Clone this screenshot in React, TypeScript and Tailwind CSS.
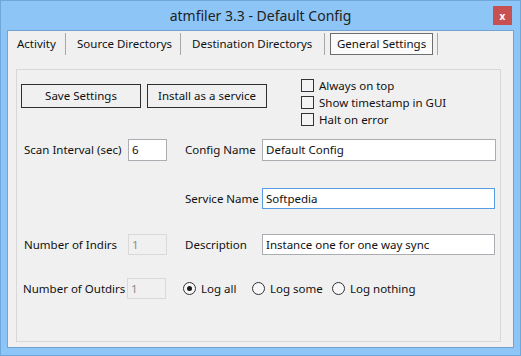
import React from 'react';

const Checkbox = ({ label }: { label: string }) => (
  <div className="flex items-center h-[17px]">
    <div className="w-[13px] h-[13px] border border-[#333333] bg-[#f4f4f4]" />
    <span className="ml-[5px]">{label}</span>
  </div>
);

const Radio = ({ label, checked, width }: { label: string; checked?: boolean; width: string }) => (
  <div className={`flex items-center ${width}`}>
    <div className="w-[13px] h-[13px] rounded-full border border-[#333333] bg-[#f7f7f7] flex items-center justify-center">
      {checked && <div className="w-[5px] h-[5px] rounded-full bg-[#1a1a1a]" />}
    </div>
    <span className="ml-[5px]">{label}</span>
  </div>
);

const Field = ({ value, className }: { value: string; className: string }) => (
  <div className={`h-full flex items-center pl-[3px] border ${className}`}>{value}</div>
);

const App: React.FC = () => {
  const tabs = [
    { name: 'Activity', w: 'w-[58px] pl-[9px]' },
    { name: 'Source Directorys', w: 'w-[115px] pl-[11px]' },
    { name: 'Destination Directorys', w: 'w-[144px] pl-[11px]' },
  ];

  return (
    <div className="w-[521px] h-[356px] bg-[#8dc5f6] border border-[#6ea7da] flex flex-col px-[6px] pb-[7px] font-['Noto_Sans',sans-serif] text-[11.5px] text-[#111111] whitespace-nowrap">
      {/* title bar */}
      <div className="relative h-[29px] flex items-center justify-center">
        <span className="text-[14px] text-[#222222]">atmfiler 3.3 - Default Config</span>
        <div className="absolute right-[2px] top-[5px] w-[19px] h-[19px] bg-[#c75050] flex items-center justify-center text-white text-[10px] font-bold leading-none">
          x
        </div>
      </div>

      {/* client area */}
      <div className="flex-1 border border-[#73a3d3] bg-[#f0f0f0] flex flex-col">
        <div className="flex h-[22px] mt-[2px]">
          {tabs.map(t => (
            <div key={t.name} className={`${t.w} h-full border-r border-[#a8a8a8] flex items-center`}>
              {t.name}
            </div>
          ))}
          <div className="w-[113px] h-full border-r border-[#a8a8a8] flex items-center">
            <div className="ml-[5px] w-[103px] h-[22px] border border-[#6e6e6e] bg-[#fbfbfb] flex items-center pl-[6px]">
              General Settings
            </div>
          </div>
        </div>

        {/* settings panel */}
        <div className="mt-[14px] ml-[8px] w-[485px] h-[273px] border border-[#d8d8d8] flex flex-col">
          <div className="flex items-start mt-[7px] pl-[4px]">
            <div className="mt-[7px] w-[120px] h-[24px] border border-[#2e2e2e] flex items-center justify-center">
              Save Settings
            </div>
            <div className="mt-[7px] ml-[6px] w-[120px] h-[24px] border border-[#2e2e2e] flex items-center justify-center">
              Install as a service
            </div>
            <div className="ml-[34px] flex flex-col">
              <Checkbox label="Always on top" />
              <Checkbox label="Show timestamp in GUI" />
              <Checkbox label="Halt on error" />
            </div>
          </div>

          <div className="flex items-center h-[22px] mt-[11px] pl-[7px]">
            <div className="w-[104px]">Scan Interval (sec)</div>
            <div className="w-[39px] h-full">
              <Field value="6" className="border-[#abadb3] bg-white" />
            </div>
            <div className="w-[18px]" />
            <div className="w-[77px]">Config Name</div>
            <div className="w-[234px] h-full">
              <Field value="Default Config" className="border-[#abadb3] bg-white" />
            </div>
          </div>

          <div className="flex items-center h-[21px] mt-[27px] pl-[7px]">
            <div className="w-[161px]" />
            <div className="w-[77px]">Service Name</div>
            <div className="w-[233px] h-full">
              <Field value="Softpedia" className="border-[#569de5] bg-white" />
            </div>
          </div>

          <div className="flex items-center h-[21px] mt-[25px] pl-[7px]">
            <div className="w-[104px]">Number of Indirs</div>
            <div className="w-[39px] h-full">
              <Field value="1" className="border-[#d9d9d9] bg-[#f0f0f0] text-[#8a8a8a]" />
            </div>
            <div className="w-[18px]" />
            <div className="w-[77px]">Description</div>
            <div className="w-[233px] h-full">
              <Field value="Instance one for one way sync" className="border-[#abadb3] bg-white" />
            </div>
          </div>

          <div className="flex items-center h-[21px] mt-[23px] pl-[6px]">
            <div className="w-[104px]">Number of Outdirs</div>
            <div className="w-[39px] h-full">
              <Field value="1" className="border-[#d9d9d9] bg-[#f0f0f0] text-[#8a8a8a]" />
            </div>
            <div className="w-[17px]" />
            <Radio label="Log all" checked width="w-[69px]" />
            <Radio label="Log some" width="w-[80px]" />
            <Radio label="Log nothing" width="w-[90px]" />
          </div>
        </div>
      </div>
    </div>
  );
};

export default App;
